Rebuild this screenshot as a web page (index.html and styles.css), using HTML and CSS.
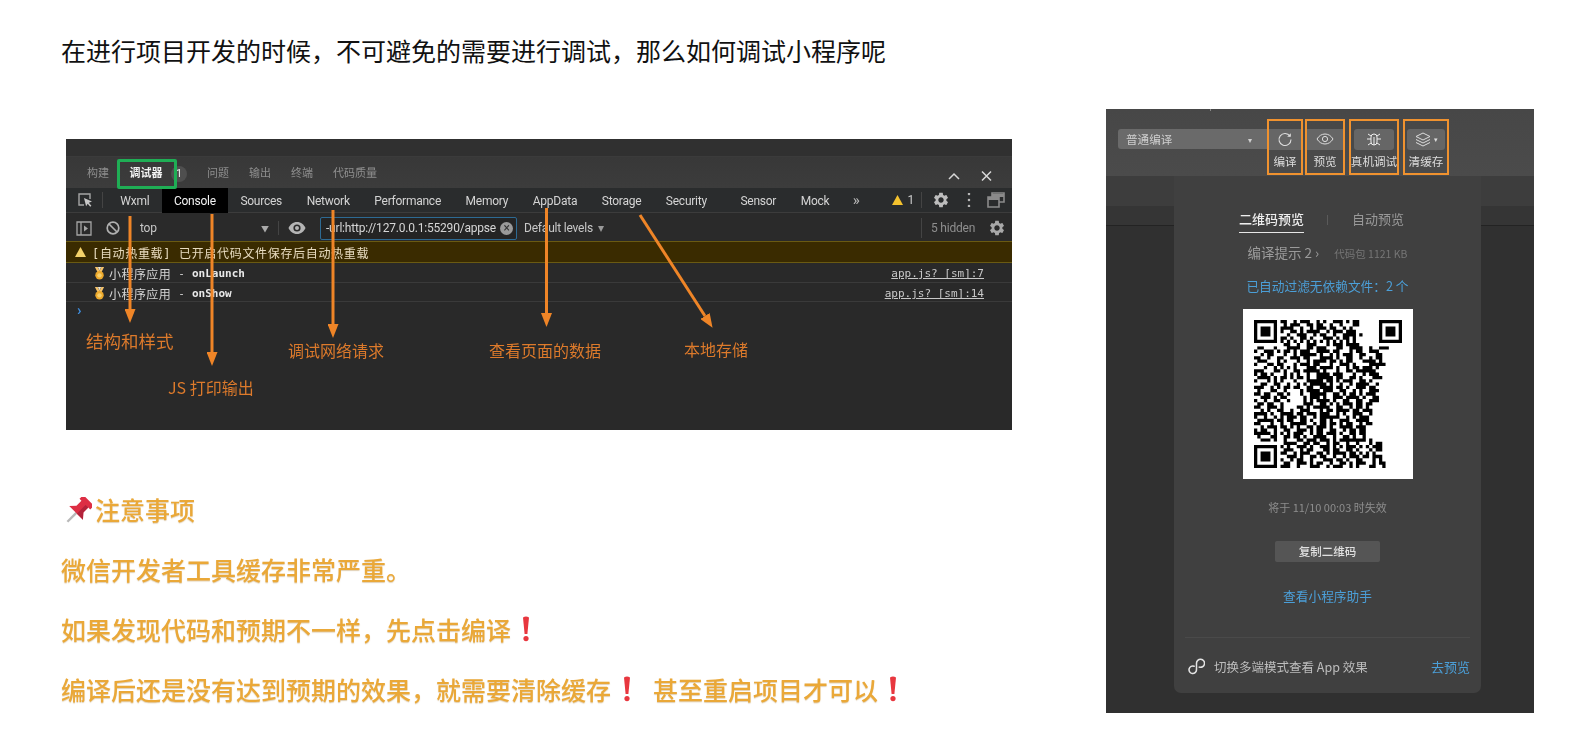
FILE: index.html
```html
<!DOCTYPE html>
<html lang="zh-CN">
<head>
<meta charset="utf-8">
<title>调试小程序</title>
<link rel="stylesheet" href="styles.css">
</head>
<body>
<svg class="defs" width="0" height="0" aria-hidden="true">
  <symbol id="gear" viewBox="0 0 24 24"><path d="M19.14 12.94c.04-.3.06-.61.06-.94 0-.32-.02-.64-.07-.94l2.03-1.58c.18-.14.23-.41.12-.61l-1.92-3.32c-.12-.22-.37-.29-.59-.22l-2.39.96c-.5-.38-1.03-.7-1.62-.94l-.36-2.54c-.04-.24-.24-.41-.48-.41h-3.84c-.24 0-.43.17-.47.41l-.36 2.54c-.59.24-1.13.57-1.62.94l-2.39-.96c-.22-.08-.47 0-.59.22L2.74 8.87c-.12.21-.08.47.12.61l2.03 1.58c-.05.3-.09.63-.09.94s.02.64.07.94l-2.03 1.58c-.18.14-.23.41-.12.61l1.92 3.32c.12.22.37.29.59.22l2.39-.96c.5.38 1.03.7 1.62.94l.36 2.54c.05.24.24.41.48.41h3.84c.24 0 .44-.17.47-.41l.36-2.54c.59-.24 1.13-.56 1.62-.94l2.39.96c.22.08.47 0 .59-.22l1.92-3.32c.12-.22.07-.47-.12-.61l-2.01-1.58zM12 15.6c-1.98 0-3.6-1.62-3.6-3.6s1.62-3.6 3.6-3.6 3.6 1.62 3.6 3.6-1.62 3.6-3.6 3.6z"/></symbol>
  <symbol id="medal" viewBox="0 0 12 14"><path d="M1 0h3l2 4 2-4h3L8 6H4z" fill="#f3c26b"/><path d="M4.2 0h3.6L6 3.6z" fill="#e9e4d6"/><circle cx="6" cy="9" r="4.6" fill="#eda92c"/><circle cx="6" cy="9" r="2.4" fill="#f7cf6a"/></symbol>
  <symbol id="bang" viewBox="0 0 8 26"><path d="M1 1.5Q4-.5 7 1.5L5.4 18H2.6z" fill="#e8373f"/><circle cx="4" cy="22.6" r="2.6" fill="#e8373f"/></symbol>
  <marker id="head" markerUnits="userSpaceOnUse" markerWidth="14" markerHeight="11" refX="0" refY="5.5" orient="auto"><path d="M0 0L14 5.5L0 11z" fill="#ef8527"/></marker>
</svg>

<div class="slide">
  <div class="main">
    <h1 class="title">在进行项目开发的时候，不可避免的需要进行调试，那么如何调试小程序呢</h1>

    <div class="devtools">
      <div class="dt-strip"></div>
      <div class="dt-panels">
        <span class="pt">构建</span>
        <span class="pt pt-active">调试器</span>
        <span class="pt-badge">1</span>
        <span class="pt pt-first">问题</span>
        <span class="pt">输出</span>
        <span class="pt">终端</span>
        <span class="pt">代码质量</span>
        <svg class="win-ctl" width="48" height="14" viewBox="0 0 48 14"><path d="M1 10l5-5 5 5M34 2.500l9 9M43 2.500l-9 9" fill="none" stroke="#d8d8d8" stroke-width="1.500"/></svg>
      </div>
      <div class="dt-tabs">
        <svg class="ic-inspect" width="16" height="16" viewBox="0 0 16 16"><path d="M7 13H2V2h11v5" fill="none" stroke="#a5a5a5" stroke-width="1.4"/><path d="M7 6l8 3.4-3.2 1.3 2.6 3-1.2 1-2.5-3-1.6 2.6z" fill="#c8c8c8"/></svg>
        <i class="vsep vsep-tabs"></i>
        <span class="dt-tab">Wxml</span>
        <span class="dt-tab dt-tab-on">Console</span>
        <span class="dt-tab">Sources</span>
        <span class="dt-tab">Network</span>
        <span class="dt-tab">Performance</span>
        <span class="dt-tab">Memory</span>
        <span class="dt-tab">AppData</span>
        <span class="dt-tab">Storage</span>
        <span class="dt-tab">Security</span>
        <span class="dt-tab dt-tab-gap">Sensor</span>
        <span class="dt-tab">Mock</span>
        <span class="dt-more">»</span>
        <span class="dt-warn"><svg width="11" height="10" viewBox="0 0 11 10"><path d="M5.5 0L11 10H0z" fill="#f4c22e"/></svg>1</span>
        <i class="vsep"></i>
        <svg class="ic-gear" width="18" height="18"><use href="#gear"/></svg>
        <svg class="ic-dots" width="4" height="14" viewBox="0 0 4 14"><path d="M2 1v.01M2 7v.01M2 13v.01" stroke="#b5b5b5" stroke-width="2.6" stroke-linecap="round"/></svg>
        <svg class="ic-dock" width="18" height="16" viewBox="0 0 18 16"><path d="M1 5h11v10H1zM5 5V1h12v9h-5" fill="none" stroke="#8a8a8a" stroke-width="1.6"/><path d="M5 2h12v3H5zM1 5h11v3H1z" fill="#8a8a8a"/></svg>
      </div>
      <div class="dt-filter">
        <svg class="ic-side" width="16" height="15" viewBox="0 0 16 15"><path d="M1 1h14v13H1zM5 1v13" fill="none" stroke="#a5a5a5" stroke-width="1.3"/><path d="M8 4.5l4 3-4 3z" fill="#a5a5a5"/></svg>
        <svg class="ic-block" width="14" height="14" viewBox="0 0 14 14"><circle cx="7" cy="7" r="5.8" fill="none" stroke="#b0b0b0" stroke-width="1.7"/><path d="M3 3l8 8" stroke="#b0b0b0" stroke-width="1.7"/></svg>
        <span class="ctx">top</span>
        <span class="ctx-arrow">▼</span>
        <i class="vsep vsep-ctx"></i>
        <svg class="ic-eye" width="18" height="12" viewBox="0 0 18 12"><path d="M9 0C5 0 2 2.600 .5 6 2 9.400 5 12 9 12s7-2.600 8.500-6C16 2.600 13 0 9 0z" fill="#b5b5b5"/><circle cx="9" cy="6" r="3.600" fill="#2a2a2a"/><circle cx="9" cy="6" r="2" fill="#b5b5b5"/></svg>
        <div class="filter-box"><span class="filter-text">-url:http://127.0.0.1:55290/appse</span><span class="filter-x">×</span></div>
        <span class="levels">Default levels <em>▾</em></span>
        <i class="vsep vsep-hidden"></i>
        <span class="hidden-count">5 hidden</span>
        <svg class="ic-gear2" width="18" height="18"><use href="#gear"/></svg>
      </div>
      <div class="log-warn">
        <svg width="11" height="10" viewBox="0 0 11 10"><path d="M5.5 0L11 10H0z" fill="#f4d26a"/></svg>
        <span class="warn-text">[自动热重载] 已开启代码文件保存后自动热重载</span>
      </div>
      <div class="log-row log-a">
        <svg class="medal" width="11" height="13"><use href="#medal"/></svg>
        <span class="log-cn">小程序应用</span><span class="log-dash">-</span><b class="log-en">onLaunch</b>
        <a class="log-link">app.js? [sm]:7</a>
      </div>
      <div class="log-row log-b">
        <svg class="medal" width="11" height="13"><use href="#medal"/></svg>
        <span class="log-cn">小程序应用</span><span class="log-dash">-</span><b class="log-en">onShow</b>
        <a class="log-link">app.js? [sm]:14</a>
      </div>
      <div class="log-prompt">›</div>

      <span class="green-box"></span>
      <svg class="arrows" viewBox="0 0 946 291" width="946" height="291">
        <g stroke="#ef8527" stroke-width="3" marker-end="url(#head)">
          <path d="M64 77V170"/>
          <path d="M146 75V213"/>
          <path d="M267 71V185"/>
          <path d="M480.500 69V174"/>
          <path d="M574 76L639 177"/>
        </g>
      </svg>
      <span class="note note-1">结构和样式</span>
      <span class="note note-2">JS 打印输出</span>
      <span class="note note-3">调试网络请求</span>
      <span class="note note-4">查看页面的数据</span>
      <span class="note note-5">本地存储</span>
    </div>

    <div class="tips">
      <p class="tip"><svg class="pin" width="28" height="28" viewBox="0 0 26 26"><g transform="rotate(45 13 13)"><rect x="12" y="15" width="2.200" height="12" fill="#b9b9b9"/><path d="M6 -1h14v5h-2.500v6.500L22 15.500H4l4.500-5V4H6z" fill="#dd2e44"/><path d="M14 4h3.500v6.500L22 15.500h-8z" fill="#b3233a"/></g></svg>注意事项</p>
      <p class="tip">微信开发者工具缓存非常严重。</p>
      <p class="tip">如果发现代码和预期不一样，先点击编译<svg class="bang" width="8" height="26"><use href="#bang"/></svg></p>
      <p class="tip">编译后还是没有达到预期的效果，就需要清除缓存<svg class="bang bang-mid" width="8" height="26"><use href="#bang"/></svg>甚至重启项目才可以<svg class="bang" width="8" height="26"><use href="#bang"/></svg></p>
    </div>
  </div>

  <div class="ide">
    <div class="ide-bar">
      <div class="mode"><span>普通编译</span><em>▾</em></div>
      <div class="tool tool-a">
        <div class="tool-btn"><svg width="16" height="16" viewBox="0 0 16 16"><path d="M13 5.200A6 6 0 1 0 14 8.500" fill="none" stroke="#ddd" stroke-width="1.100"/><path d="M13.800 2.200v3.600h-3.600z" fill="#ddd"/></svg></div>
        <span>编译</span>
      </div>
      <div class="tool tool-b">
        <div class="tool-btn"><svg width="18" height="12" viewBox="0 0 18 12"><path d="M1 6c2-3.300 4.800-5 8-5s6 1.700 8 5c-2 3.300-4.800 5-8 5S3 9.300 1 6z" fill="none" stroke="#ddd"/><circle cx="9" cy="6" r="2.600" fill="none" stroke="#ddd"/></svg></div>
        <span>预览</span>
      </div>
      <div class="tool tool-c">
        <div class="tool-btn tool-btn-c"><svg width="16" height="15" viewBox="0 0 16 15"><path d="M5 5a3 3 0 0 1 6 0v5a3 3 0 0 1-6 0zM5 7H1M15 7h-4M5 4L2 2M11 4l3-2M5 11l-3 2M11 11l3 2M8 5v8" fill="none" stroke="#eee"/></svg></div>
        <span>真机调试</span>
      </div>
      <div class="tool tool-d">
        <div class="tool-btn tool-btn-d"><svg width="16" height="15" viewBox="0 0 16 15"><path d="M8 1l7 3.500-7 3.500-7-3.500zM1 7.500L8 11l7-3.500M1 10.500L8 14l7-3.500" fill="none" stroke="#ddd"/></svg><em>▾</em></div>
        <span>清缓存</span>
      </div>
    </div>
    <div class="band band-a"></div>
    <div class="band band-b"></div>
    <div class="band band-c"></div>

    <div class="qr-card">
      <div class="q-tabs">
        <span class="q-tab-on">二维码预览</span>
        <i class="q-sep"></i>
        <span class="q-tab">自动预览</span>
      </div>
      <div class="q-hint"><span>编译提示 2 ›</span><small>代码包 1121 KB</small></div>
      <div class="q-link q-filter">已自动过滤无依赖文件：2 个</div>
      <div class="qr">
        <svg viewBox="0 0 45 45" width="148" height="148">
          <path fill="none" stroke="#000" stroke-width="1" d="
M8 .5h2m2 0h1m1 0h3m2 0h1m1 0h1m2 0h3m1 0h1m1 0h2
M9 1.500h1m1 0h3m2 0h2m1 0h2m2 0h1m2 0h1m3 0h2
M8 2.500h4m2 0h1m2 0h1m1 0h3m1 0h2m2 0h1m1 0h1
M8 3.500h1m2 0h2m1 0h1m1 0h4m2 0h1m1 0h3m1 0h3
M10 4.500h1m2 0h3m2 0h1m1 0h2m2 0h1m2 0h4m1 0h1
M8 5.500h2m1 0h1m2 0h2m1 0h1m3 0h3m1 0h1m1 0h2m1 0h1
M8 6.500h1m1 0h1m1 0h1m1 0h1m1 0h1m1 0h1m1 0h1m1 0h1m1 0h1m1 0h1m1 0h1m1 0h1
M9 7.500h2m2 0h1m2 0h3m3 0h1m1 0h3m1 0h4
M1 8.500h2m3 0h1m3 0h4m2 0h2m1 0h3m3 0h2m2 0h4m2 0h1m2 0h3
M0 9.500h1m2 0h3m1 0h1m1 0h2m1 0h1m1 0h3m2 0h4m1 0h2m3 0h1m1 0h2m2 0h3
M2 10.500h1m1 0h2m3 0h1m2 0h1m1 0h5m1 0h1m2 0h1m1 0h1m1 0h3m2 0h2m3 0h2
M0 11.500h2m2 0h1m2 0h2m2 0h3m1 0h2m3 0h4m1 0h1m2 0h2m2 0h1m2 0h1m1 0h2
M1 12.500h3m3 0h1m1 0h1m3 0h1m2 0h1m1 0h4m1 0h2m1 0h1m1 0h2m3 0h4m1 0h1
M0 13.500h1m3 0h2m1 0h2m3 0h1m1 0h3m1 0h2m3 0h1m2 0h3m1 0h1m4 0h5
M3 14.500h1m2 0h1m1 0h1m1 0h1m1 0h1m3 0h3m1 0h4m1 0h1m2 0h1m1 0h2m1 0h3m1 0h1
M0 15.500h3m3 0h2m1 0h1m2 0h2m1 0h5m1 0h1m3 0h1m2 0h2m1 0h6
M0 16.500h1m1 0h2m1 0h1m3 0h1m1 0h1m1 0h1m2 0h1m2 0h4m1 0h3m3 0h1m2 0h1m1 0h3
M1 17.500h4m1 0h1m1 0h2m1 0h1m1 0h2m1 0h1m2 0h5m1 0h2m2 0h2m1 0h1m3 0h3
M0 18.500h1m3 0h1m1 0h1m1 0h1m3 0h1m3 0h5m1 0h2m1 0h1m1 0h3m2 0h2m1 0h1
M2 19.500h2m2 0h2m2 0h1m2 0h1m1 0h1m1 0h5m1 0h1m2 0h1m2 0h1m1 0h4m2 0h1
M0 20.500h3m2 0h1m1 0h1m1 0h2m1 0h2m2 0h2m2 0h4m1 0h2m1 0h1m2 0h3m1 0h2
M1 21.500h1m3 0h2m2 0h1m4 0h1m1 0h4m1 0h3m2 0h2m2 0h1m1 0h1m2 0h3
M0 22.500h2m1 0h2m2 0h2m1 0h1m3 0h1m2 0h5m2 0h2m1 0h1m1 0h2m1 0h1m1 0h3
M2 23.500h3m1 0h1m1 0h2m5 0h1m1 0h3m1 0h1m2 0h3m1 0h4m1 0h1m2 0h2
M0 24.500h1m2 0h1m2 0h2m2 0h1m4 0h1m1 0h1m1 0h4m1 0h1m2 0h2m2 0h2m2 0h3
M1 25.500h2m1 0h2m2 0h1m6 0h3m2 0h2m1 0h1m1 0h1m1 0h3m1 0h2m1 0h2
M0 26.500h2m2 0h3m1 0h1m4 0h2m1 0h1m1 0h5m2 0h2m2 0h1m1 0h2m1 0h1
M2 27.500h1m1 0h1m2 0h2m2 0h1m2 0h3m3 0h1m1 0h2m1 0h4m1 0h2m1 0h3
M0 28.500h4m1 0h1m2 0h4m1 0h2m1 0h3m1 0h3m2 0h1m1 0h1m2 0h3m2 0h1
M0 29.500h1m2 0h1m2 0h1m1 0h1m1 0h3m1 0h2m2 0h1m1 0h6m2 0h1m1 0h1m1 0h3
M1 30.500h5m1 0h2m1 0h2m2 0h2m1 0h1m2 0h2m1 0h1m2 0h3m2 0h4
M0 31.500h2m3 0h1m2 0h1m2 0h5m2 0h1m1 0h2m1 0h2m1 0h1m1 0h2m2 0h1m1 0h2
M2 32.500h1m1 0h3m1 0h2m1 0h1m1 0h1m2 0h2m1 0h3m1 0h1m2 0h4m1 0h3
M0 33.500h1m1 0h2m2 0h1m2 0h2m2 0h3m1 0h1m1 0h2m2 0h2m2 0h1m1 0h2m1 0h2
M0 34.500h5m1 0h1m1 0h1m1 0h1m1 0h3m2 0h1m1 0h2m1 0h3m1 0h1m2 0h2m1 0h2
M1 35.500h1m3 0h2m2 0h2m1 0h2m1 0h1m2 0h4m2 0h1m2 0h2m1 0h1m2 0h1
M2 36.500h3m1 0h1m2 0h1m3 0h2m1 0h3m1 0h3m1 0h1m1 0h8m1 0h1
M9 37.500h4m2 0h2m1 0h2m2 0h1m1 0h2m2 0h1m2 0h1m3 0h1m1 0h2
M8 38.500h1m1 0h1m2 0h3m1 0h1m2 0h3m1 0h1m1 0h1m1 0h3m1 0h1m1 0h1m1 0h3
M9 39.500h3m2 0h1m1 0h2m3 0h2m1 0h2m2 0h2m1 0h1m3 0h1m1 0h2
M8 40.500h2m2 0h1m1 0h3m2 0h2m1 0h1m1 0h4m1 0h2m1 0h1m1 0h1m1 0h1
M10 41.500h3m1 0h1m2 0h2m1 0h2m2 0h1m2 0h1m1 0h3m1 0h2m1 0h3
M8 42.500h1m2 0h1m1 0h2m2 0h1m3 0h3m1 0h2m1 0h1m2 0h2m3 0h1m1 0h1
M9 43.500h2m2 0h3m1 0h1m1 0h2m2 0h1m2 0h2m1 0h1m1 0h3m2 0h1m1 0h2
M8 44.500h3m2 0h1m3 0h3m2 0h1m1 0h3m2 0h1m1 0h1m3 0h2m2 0h1"/>
          <path fill="#fff" d="M0 0h8v8H0zM37 0h8v8h-8zM0 37h8v8H0z"/>
          <path fill="#000" fill-rule="evenodd" d="M0 0h7v7H0zM1 1v5h5V1zM2 2h3v3H2zM38 0h7v7h-7zM39 1v5h5V1zM40 2h3v3h-3zM0 38h7v7H0zM1 39v5h5v-5zM2 40h3v3H2z"/>
        </svg>
      </div>
      <div class="q-expire">将于 11/10 00:03 时失效</div>
      <div class="q-copy">复制二维码</div>
      <div class="q-link q-helper">查看小程序助手</div>
      <div class="q-rule"></div>
      <div class="q-foot">
        <svg width="17" height="18" viewBox="2 1 12 13"><path d="M6.300 7.700A2.700 2.700 0 1 0 8 10.300V5.600a2.900 2.900 0 1 1 2 2.700" fill="none" stroke="#e4e4e4" stroke-width="1.100" stroke-linecap="round"/></svg>
        <span class="q-foot-text">切换多端模式查看 App 效果</span>
        <span class="q-go">去预览</span>
      </div>
    </div>
    <span class="ide-notch"></span>
  </div>
</div>
</body>
</html>
```

FILE: styles.css
```css
* { box-sizing: border-box; }
html, body { margin: 0; padding: 0; background: #fff; }
body {
  width: 1584px;
  height: 752px;
  overflow: hidden;
  font-family: "Noto Sans CJK SC", sans-serif;
}
.defs { position: absolute; }
.slide { display: flex; align-items: flex-start; }
.main { width: 1106px; padding-left: 61px; flex: none; }

.title {
  margin: 30px 0 0;
  font-size: 25px;
  font-weight: 400;
  line-height: 40px;
  color: #111;
  white-space: nowrap;
}

/* devtools screenshot */
.devtools {
  position: relative;
  width: 946px;
  height: 291px;
  margin: 69px 0 0 5px;
  background: #292929;
  font-family: Roboto, "Noto Sans CJK SC", sans-serif;
  filter: blur(.45px);
  overflow: hidden;
}
.dt-strip { height: 18px; background: #303030; border-bottom: 1px solid #3b3b3b; }
.dt-panels {
  display: flex;
  align-items: center;
  height: 31px;
  padding: 2px 0 0 21px;
  background: linear-gradient(#383838, #3c3c3c);
  font-size: 11px;
  color: #8e8e8e;
}
.pt { margin-right: 20px; line-height: 16px; }
.pt-active { margin: 0 0 0 -13px; width: 60px; text-align: center; color: #f1f1f1; font-weight: 700; }
.pt-badge {
  width: 16px; height: 16px; margin: 0 20px 0 -5px;
  border-radius: 50%;
  background: #4f4f4f;
  color: #eee;
  font-size: 11px;
  line-height: 16px;
  text-align: center;
}
.pt-first { margin-left: 0; }
.win-ctl { margin-left: auto; margin-right: 16px; margin-top: 4px; }
.green-box {
  position: absolute;
  left: 51px; top: 20px;
  width: 60px; height: 30px;
  border: 3px solid #1fae55;
  border-radius: 2px;
}
.dt-tabs {
  display: flex;
  align-items: center;
  height: 25px;
  background: #2a2c2d;
  border-bottom: 1px solid #3c3c3c;
  padding-left: 11px;
  font-size: 12px;
  letter-spacing: -.25px;
  color: #d4d4d4;
}
.vsep { display: block; flex: none; width: 1px; height: 16px; background: #444; }
.vsep-tabs { margin: 0 5px 0 9px; }
.dt-tab { flex: none; height: 25px; line-height: 27px; padding: 0 12.300px; }
.dt-tab-on { background: #000; color: #f2f2f2; }
.dt-tab-gap { margin-left: 9px; }
.dt-more { margin-left: 11px; font-size: 15px; color: #bbb; }
.dt-warn { display: flex; align-items: center; gap: 5px; margin-left: 32px; margin-right: 7px; color: #ccc; letter-spacing: 0; }
.ic-gear { margin-left: 10px; fill: #bdbdbd; flex: none; }
.ic-dots { margin-left: 17px; flex: none; }
.ic-dock { margin-left: 16px; flex: none; }
.dt-filter {
  display: flex;
  align-items: center;
  height: 28px;
  padding: 2px 0 0 10px;
  font-size: 12px;
  letter-spacing: -.2px;
  color: #c8c8c8;
  background: #2a2a2a;
}
.ic-block { margin-left: 14px; }
.ctx { margin-left: 20px; width: 121px; flex: none; }
.ctx-arrow { font-size: 8px; color: #aaa; width: 17px; flex: none; }
.vsep-ctx { height: 14px; }
.ic-eye { margin-left: 9px; }
.filter-box {
  display: flex;
  align-items: center;
  width: 197px;
  height: 23px;
  margin-left: 14px;
  padding-left: 5px;
  border: 1px solid #2d6a93;
  border-radius: 2px;
  background: #242424;
  flex: none;
}
.filter-text { width: 172px; flex: none; white-space: nowrap; color: #d6d6d6; }
.filter-x {
  width: 13px; height: 13px; margin-left: 2px;
  border-radius: 50%;
  background: #9a9a9a;
  color: #333;
  font-size: 12px;
  line-height: 13px;
  text-align: center;
}
.levels { margin-left: 7px; width: 397px; flex: none; }
.levels em { font-style: normal; color: #999; margin-left: 2px; }
.vsep-hidden { height: 20px; margin-right: 9px; margin-left: 0; }
.hidden-count { color: #8f8f8f; width: 57px; flex: none; }
.ic-gear2 { fill: #a8a8a8; }
.log-warn {
  display: flex;
  align-items: center;
  height: 22px;
  padding-left: 9px;
  background: #3a2b00;
  border-top: 1px solid #6a5a12;
  border-bottom: 1px solid #6a5a12;
}
.warn-text {
  margin-left: 6px;
  font-family: "DejaVu Sans Mono", "Noto Sans CJK SC", monospace;
  font-size: 12px;
  letter-spacing: .67px;
  color: #e8dcc0;
  white-space: pre;
}
.log-row {
  display: flex;
  align-items: center;
  padding: 0 28px;
  border-bottom: 1px solid #3a3a3a;
  font-family: "DejaVu Sans Mono", "Noto Sans CJK SC", monospace;
  font-size: 11px;
  color: #d6d6d6;
}
.log-a { height: 20px; padding-top: 2px; }
.log-b { height: 19px; padding-top: 3px; }
.medal { flex: none; margin-right: 4px; }
.log-cn { font-size: 12px; letter-spacing: .45px; }
.log-dash { margin: 0 7px; }
.log-en { color: #e8e8e8; }
.log-link { margin-left: auto; text-decoration: underline; color: #c8c8c8; }
.log-prompt { padding: 0 0 0 11px; color: #3f8fe0; font-size: 15px; line-height: 17px; font-weight: 700; }
.arrows { position: absolute; left: 0; top: 0; }
.note { position: absolute; color: #dd7a2b; font-family: "Noto Sans CJK SC", sans-serif; white-space: nowrap; line-height: 24px; }
.note-1 { left: 20px; top: 190px; font-size: 17.500px; }
.note-2 { left: 102px; top: 236px; font-size: 16px; }
.note-3 { left: 222px; top: 199px; font-size: 16px; }
.note-4 { left: 423px; top: 199px; font-size: 16px; }
.note-5 { left: 618px; top: 198px; font-size: 16px; }

/* notes */
.tips { margin-top: 49px; filter: blur(.4px); }
.tip {
  display: flex;
  align-items: center;
  height: 60px;
  margin: 0;
  font-size: 25px;
  font-weight: 500;
  color: #eaa838;
  text-shadow: 0 1px 1px rgba(170, 120, 40, .35);
  white-space: nowrap;
}
.pin { margin: 4px 3px 0 3px; flex: none; }
.bang { flex: none; margin: 0 0 0 11px; }
.bang-mid { margin: 0 22px 0 12px; }

/* right IDE screenshot */
.ide {
  position: relative;
  flex: none;
  width: 428px;
  height: 604px;
  margin-top: 109px;
  background: #2f2f2f;
  filter: blur(.4px);
  overflow: hidden;
}
.ide-bar {
  display: flex;
  align-items: flex-start;
  height: 67px;
  padding: 10px 0 0 12px;
  background: linear-gradient(#474747, #4b4b4b);
  font-size: 11.600px;
  color: #dcdcdc;
}
.mode {
  display: flex;
  align-items: center;
  justify-content: space-between;
  width: 149px;
  height: 20px;
  margin-top: 10px;
  padding: 0 15px 0 8px;
  border-radius: 3px 0 0 3px;
  background: #6a6a6a;
  color: #cfcfcf;
  flex: none;
}
.mode em { font-style: normal; font-size: 8px; }
.tool {
  display: flex;
  flex-direction: column;
  align-items: center;
  height: 56px;
  padding-top: 7.500px;
  border: 2.500px solid #f0922f;
  flex: none;
}
.tool span { margin-top: 2px; line-height: 18px; white-space: nowrap; }
.tool-a { width: 36px; }
.tool-b { width: 40px; margin-left: 2px; }
.tool-c { width: 50px; margin-left: 4px; }
.tool-d { width: 46px; margin-left: 4px; }
.tool-btn {
  display: flex;
  align-items: center;
  justify-content: center;
  align-self: stretch;
  height: 21px;
  background: #666;
}
.tool-btn-c { margin: 0 3px; border-radius: 3px; }
.tool-btn-d { margin: 0 2px; border-radius: 3px; gap: 3px; }
.tool-btn-d em { font-style: normal; font-size: 7px; color: #ddd; }
.band-a { height: 30px; background: #3d3d3d; }
.band-b { height: 20px; background: #353535; border-bottom: 1px solid #232323; }
.band-c { height: 487px; background: #303030; }
.ide-notch { position: absolute; left: 104px; top: 0; width: 1px; height: 2px; background: #888; }

.qr-card {
  position: absolute;
  left: 68px; top: 67px;
  display: flex;
  flex-direction: column;
  align-items: center;
  width: 307px;
  height: 517px;
  border-radius: 0 0 7px 7px;
  background: #404040;
  font-size: 13px;
}
.q-tabs { display: flex; align-items: center; height: 26px; margin: 31px 12px 0 0; color: #999; }
.q-tab-on { height: 26px; line-height: 23px; color: #eee; font-weight: 500; border-bottom: 1px solid #e6e6e6; }
.q-sep { display: block; width: 1px; height: 10px; margin: 0 24px 0 23px; background: #5a5a5a; }
.q-tab { line-height: 23px; align-self: flex-start; }
.q-hint { display: flex; align-items: baseline; height: 20px; margin-top: 9px; line-height: 20px; color: #9a9a9a; }
.q-hint span { font-size: 13.500px; }
.q-hint small { margin-left: 15px; font-size: 10.500px; color: #757575; }
.q-link { color: #4b9fd8; height: 20px; line-height: 20px; font-size: 12.700px; }
.q-filter { margin-top: 14px; }
.qr { width: 170px; height: 170px; margin-top: 13px; padding: 11px; background: #fff; flex: none; }
.qr svg { display: block; }
.q-expire { height: 16px; margin-top: 20px; font-size: 11px; line-height: 16px; color: #8d8d8d; }
.q-copy {
  width: 105px; height: 21px; margin-top: 26px;
  border-radius: 2px;
  background: #555;
  color: #e0e0e0;
  font-size: 11.500px;
  font-weight: 500;
  line-height: 21px;
  text-align: center;
}
.q-helper { margin-top: 24px; }
.q-rule { width: 285px; height: 1px; margin-top: 31px; background: #4a4a4a; }
.q-foot { display: flex; align-items: center; width: 285px; height: 20px; margin-top: 18px; padding-left: 3px; }
.q-foot-text { margin-left: 9px; font-size: 12.500px; color: #bdbdbd; }
.q-go { margin-left: auto; color: #4b9fd8; }
```
